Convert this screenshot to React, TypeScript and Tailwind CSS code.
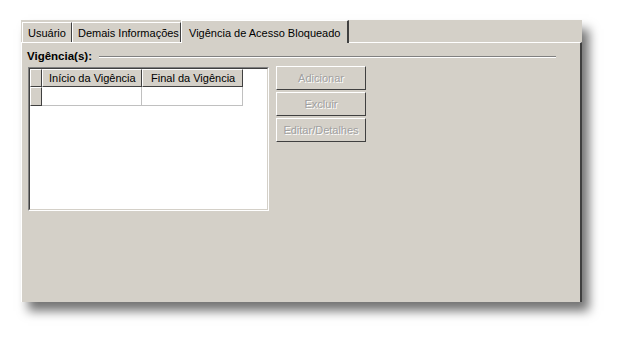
import React from "react";

const font = { fontFamily: '"Liberation Sans", "DejaVu Sans", Arial, sans-serif' };

const Tab: React.FC<{ label: string; active?: boolean; width: string }> = ({ label, active, width }) =>
    active ? (
        <div
            className={`${width} h-[23px] -mb-[1px] relative z-10 bg-[#d4d0c8] border-t border-l border-white border-r-2 border-r-[#404040] flex items-start pt-[4px] pl-[7px] text-[11px] text-black whitespace-nowrap`}
        >
            {label}
        </div>
    ) : (
        <div
            className={`${width} h-[20px] bg-[#d4d0c8] border-t border-l border-white border-r border-r-[#404040] flex items-center pl-[5px] pt-[2px] text-[11px] text-black whitespace-nowrap`}
        >
            {label}
        </div>
    );

const DisabledButton: React.FC<{ label: string }> = ({ label }) => (
    <div className="w-[90px] h-[24px] bg-[#d4d0c8] border border-t-white border-l-white border-r-[#404040] border-b-[#404040] flex items-center justify-center">
        <span className="text-[11px] text-[#a0a0a0] [text-shadow:1px_1px_0_#ffffff]">{label}</span>
    </div>
);

export default function App() {
    return (
        <div className="w-[624px] h-[344px] bg-white overflow-hidden" style={font}>
            <div className="ml-[21px] mt-[20px] w-[561px] h-[282px] flex flex-col shadow-[7px_9px_10px_rgba(0,0,0,0.55)]">
                <div className="h-[22px] flex items-end bg-[#d4d0c8] pl-[1px]">
                    <Tab label="Usuário" width="w-[50px]" />
                    <Tab label="Demais Informações" width="w-[109px]" />
                    <Tab label="Vigência de Acesso Bloqueado" width="w-[168px]" active />
                </div>
                <div className="flex-1 bg-[#d4d0c8] border-t border-l border-white border-r-2 border-r-[#404040] pl-[5px] pt-[7px]">
                    <div className="flex items-center h-[14px]">
                        <span className="text-[11.5px] font-bold text-black">Vigência(s):</span>
                        <div className="flex-1 ml-[7px] mr-[24px] border-t border-t-[#808080] border-b border-b-white" />
                    </div>
                    <div className="flex mt-[3px] ml-[1px]">
                        <div className="w-[241px] h-[144px] border border-t-[#808080] border-l-[#808080] border-r-white border-b-white">
                            <div className="w-full h-full bg-white border border-t-[#404040] border-l-[#404040] border-r-[#d4d0c8] border-b-[#d4d0c8]">
                                <div className="flex h-[18px]">
                                    <div className="w-[12px] bg-[#d4d0c8] border border-t-white border-l-white border-r-[#404040] border-b-[#404040]" />
                                    <div className="w-[100px] bg-[#d4d0c8] border border-t-white border-l-white border-r-[#404040] border-b-[#404040] text-[11px] text-black flex items-center pl-[6px]">
                                        Início da Vigência
                                    </div>
                                    <div className="w-[101px] bg-[#d4d0c8] border border-t-white border-l-white border-r-[#404040] border-b-[#404040] text-[11px] text-black flex items-center pl-[8px]">
                                        Final da Vigência
                                    </div>
                                </div>
                                <div className="flex h-[19px]">
                                    <div className="w-[12px] bg-[#d4d0c8] border border-t-white border-l-white border-r-[#404040] border-b-[#404040]" />
                                    <div className="w-[100px] border-r border-b border-[#c0c0c0]" />
                                    <div className="w-[101px] border-r border-b border-[#c0c0c0]" />
                                </div>
                            </div>
                        </div>
                        <div className="ml-[7px] -mt-[1px] flex flex-col gap-[2px]">
                            <DisabledButton label="Adicionar" />
                            <DisabledButton label="Excluir" />
                            <DisabledButton label="Editar/Detalhes" />
                        </div>
                    </div>
                </div>
            </div>
        </div>
    );
}
